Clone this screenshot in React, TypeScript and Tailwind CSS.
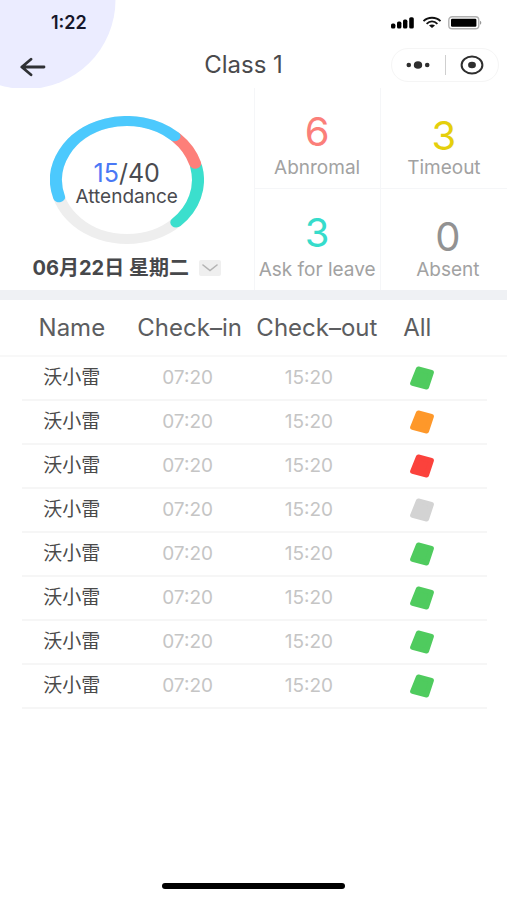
import React from 'react';

const BackIcon = () => (
  <svg width="26" height="20" viewBox="0 0 26 20" fill="none" stroke="#2f3135" strokeWidth="2.8" strokeLinecap="round" strokeLinejoin="round">
    <path d="M24 10H2M11 2.2L1.8 10L11 17.8" />
  </svg>
);

const StatusIcons = () => (
  <svg width="92" height="16" viewBox="0 0 92 16" fill="none">
    <g fill="#000">
      <rect x="1" y="8.6" width="4.4" height="5" rx="1.6" />
      <rect x="7" y="6.6" width="4.4" height="7" rx="1.6" />
      <rect x="13" y="4.6" width="4.4" height="9" rx="1.6" />
      <rect x="19.2" y="2.2" width="4.6" height="11.4" rx="1.6" />
    </g>
    <g stroke="#111" strokeWidth="1.8">
      <path d="M33.5 6.2C38 1.6 46 1.6 50.5 6.2" />
      <path d="M36.6 8.8C39.8 5.7 44.2 5.7 47.4 8.8" />
    </g>
    <path d="M39 10.4C40.8 9.1 43.2 9.1 45 10.4L42 12.9Z" fill="#111" />
    <rect x="58.8" y="1.8" width="30" height="12" rx="3.4" stroke="#b0b0b0" strokeWidth="1.4" />
    <rect x="61" y="3.8" width="25.4" height="8" rx="1.2" fill="#000" />
    <path d="M90 5.8C91.8 6.4 91.8 9.2 90 9.8Z" fill="#999" />
  </svg>
);

const arcs = [
  { color: '#3bdfcd', start: 347, length: 59 },
  { color: '#fd7f79', start: 314, length: 30 },
  { color: '#4cc9fd', start: 163, length: 149 }
];

const AttendanceRing = () => (
  <svg className="col-start-1 row-start-1" width="154" height="128" viewBox="0 0 128 128" preserveAspectRatio="none" fill="none" strokeWidth="10">
    <circle cx="64" cy="64" r="59" stroke="#eeeeee" />
    {arcs.map((arc) => (
      <circle
        key={arc.color}
        cx="64"
        cy="64"
        r="59"
        pathLength="360"
        stroke={arc.color}
        strokeLinecap="round"
        strokeDasharray={`${arc.length} 360`}
        transform={`rotate(${arc.start} 64 64)`}
      />
    ))}
  </svg>
);

const stats = [
  { label: 'Abnromal', value: 6, className: 'border-b border-r pt-6', color: 'text-[#fb7f7a]' },
  { label: 'Timeout', value: 3, className: 'border-b pt-7', color: 'text-[#e5cf0c]' },
  { label: 'Ask for leave', value: 3, className: 'border-r pt-6', color: 'text-[#36dccb]' },
  { label: 'Absent', value: 0, className: 'pt-7 pl-2', color: 'text-[#929292]' }
];

const records = [
  { name: '沃小雷', checkIn: '07:20', checkOut: '15:20', status: 'Present', color: 'text-[#4fcb5e]' },
  { name: '沃小雷', checkIn: '07:20', checkOut: '15:20', status: 'Timeout', color: 'text-[#fe982a]' },
  { name: '沃小雷', checkIn: '07:20', checkOut: '15:20', status: 'Abnormal', color: 'text-[#fb423c]' },
  { name: '沃小雷', checkIn: '07:20', checkOut: '15:20', status: 'Absent', color: 'text-[#d3d3d3]' },
  { name: '沃小雷', checkIn: '07:20', checkOut: '15:20', status: 'Present', color: 'text-[#4fcb5e]' },
  { name: '沃小雷', checkIn: '07:20', checkOut: '15:20', status: 'Present', color: 'text-[#4fcb5e]' },
  { name: '沃小雷', checkIn: '07:20', checkOut: '15:20', status: 'Present', color: 'text-[#4fcb5e]' },
  { name: '沃小雷', checkIn: '07:20', checkOut: '15:20', status: 'Present', color: 'text-[#4fcb5e]' }
];

const Header = () => (
  <header className="relative h-[88px]">
    <svg className="absolute left-0 top-0" width="116" height="88" viewBox="0 0 116 88" aria-hidden="true">
      <ellipse cx="26" cy="0" rx="89.5" ry="89" fill="#ebecff" />
    </svg>
    <div className="relative flex h-[46px] items-center justify-between pl-[51px] pr-[25px]">
      <span className="text-lg font-semibold text-[#16162a]">1:22</span>
      <StatusIcons />
    </div>
    <div className="relative flex items-center pl-5 pr-2 pt-[2px]">
      <button type="button" aria-label="Back" className="pt-[3px]">
        <BackIcon />
      </button>
      <h1 className="flex-1 pl-[50px] text-center text-2xl leading-[34px] text-[#4a4a4c]">Class 1</h1>
      <div className="flex h-[34px] w-[108px] items-center rounded-full border border-[#f5f5f5] bg-white">
        <button type="button" aria-label="More" className="flex h-5 flex-1 items-center justify-center border-r border-[#cfcfcf]">
          <svg width="24" height="10" viewBox="0 0 24 10" fill="#2e2e2e">
            <circle cx="2.8" cy="5" r="2.3" />
            <ellipse cx="12" cy="5" rx="4.2" ry="3.8" />
            <circle cx="21.2" cy="5" r="2.3" />
          </svg>
        </button>
        <button type="button" aria-label="Close" className="flex flex-1 items-center justify-center">
          <svg width="24" height="20" viewBox="0 0 24 20">
            <ellipse cx="12" cy="10" rx="10.4" ry="8.6" fill="none" stroke="#2e2e2e" strokeWidth="2" />
            <ellipse cx="12" cy="10" rx="3.9" ry="3.3" fill="#2e2e2e" />
          </svg>
        </button>
      </div>
    </div>
  </header>
);

const Summary = () => (
  <section className="grid grid-cols-2 border-b-[10px] border-[#eff1f4]">
    <div className="flex flex-col items-center pt-7">
      <div className="grid place-items-center">
        <AttendanceRing />
        <div className="col-start-1 row-start-1 pt-2 text-center text-[#4a4b50]">
          <p className="text-[25px] leading-[26px]">
            <span className="text-[#4a78f5]">15</span>/40
          </p>
          <p className="text-[19px] leading-[22px]">Attendance</p>
        </div>
      </div>
      <button type="button" className="mt-3 flex items-center gap-[10px] whitespace-nowrap text-xl font-bold leading-6 text-[#47484b]">
        06月22日 星期二
        <span className="flex h-4 w-[22px] items-center justify-center rounded-xs bg-[#efefef]">
          <svg width="16" height="8" viewBox="0 0 16 8" fill="none" stroke="#b3b3b3" strokeWidth="1.6" strokeLinecap="round">
            <path d="M1 1L8 6.6L15 1" />
          </svg>
        </span>
      </button>
    </div>
    <dl className="grid grid-cols-2 border-l border-[#f5f6f8]">
      {stats.map((stat) => (
        <div key={stat.label} className={`flex h-[101px] flex-col-reverse items-center justify-end border-[#f5f6f8] ${stat.className}`}>
          <dt className="mt-auto whitespace-nowrap pb-2 text-[19px] leading-6 text-[#a2a2a2]">{stat.label}</dt>
          <dd className={`text-[40px] leading-10 ${stat.color}`}>{stat.value}</dd>
        </div>
      ))}
    </dl>
  </section>
);

const AttendanceTable = () => (
  <table className="w-full table-fixed border-separate border-spacing-0">
    <thead>
      <tr className="h-[57px] whitespace-nowrap text-2xl text-[#5c5d60]">
        <th className="w-[24%] border-b-2 border-[#f8f8f8] p-0 pl-[22px] font-normal">Name</th>
        <th className="w-[26%] border-b-2 border-[#f8f8f8] p-0 pl-1 font-normal">Check–in</th>
        <th className="w-[25%] border-b-2 border-[#f8f8f8] p-0 font-normal">Check–out</th>
        <th className="border-b-2 border-[#f8f8f8] p-0 pl-[23px] text-left font-normal">All</th>
      </tr>
    </thead>
    <tbody>
      {records.map((record, index) => (
        <tr key={index} className="text-[19px] text-[#c5c5c5]">
          <td className="p-0 pl-[22px]">
            <div className="flex h-11 items-center justify-center border-b-2 border-[#f6f6f6] text-[#4a4a4a]">{record.name}</div>
          </td>
          <td className="p-0">
            <div className="flex h-11 items-center justify-center border-b-2 border-[#f6f6f6]">{record.checkIn}</div>
          </td>
          <td className="p-0">
            <div className="flex h-11 items-center justify-center border-b-2 border-[#f6f6f6] pr-4">{record.checkOut}</div>
          </td>
          <td className="p-0 pr-5">
            <div className="flex h-11 items-center border-b-2 border-[#f6f6f6] pl-[29px]">
              <svg className={record.color} width="26" height="24" viewBox="0 0 26 24" role="img" aria-label={record.status}>
                <path d="M9.4 3L22.4 6.4L17.6 21L3.6 17.4Z" fill="currentColor" stroke="currentColor" strokeWidth="5" strokeLinejoin="round" />
              </svg>
            </div>
          </td>
        </tr>
      ))}
    </tbody>
  </table>
);

const App = () => {
  return (
    <main className="flex min-h-screen flex-col bg-white font-[Inter,'Noto_Sans_CJK_SC',sans-serif]">
      <Header />
      <Summary />
      <AttendanceTable />
      <div className="mx-auto mb-[11px] mt-auto h-[6px] w-[36%] rounded-full bg-black" />
    </main>
  );
};

export default App;
